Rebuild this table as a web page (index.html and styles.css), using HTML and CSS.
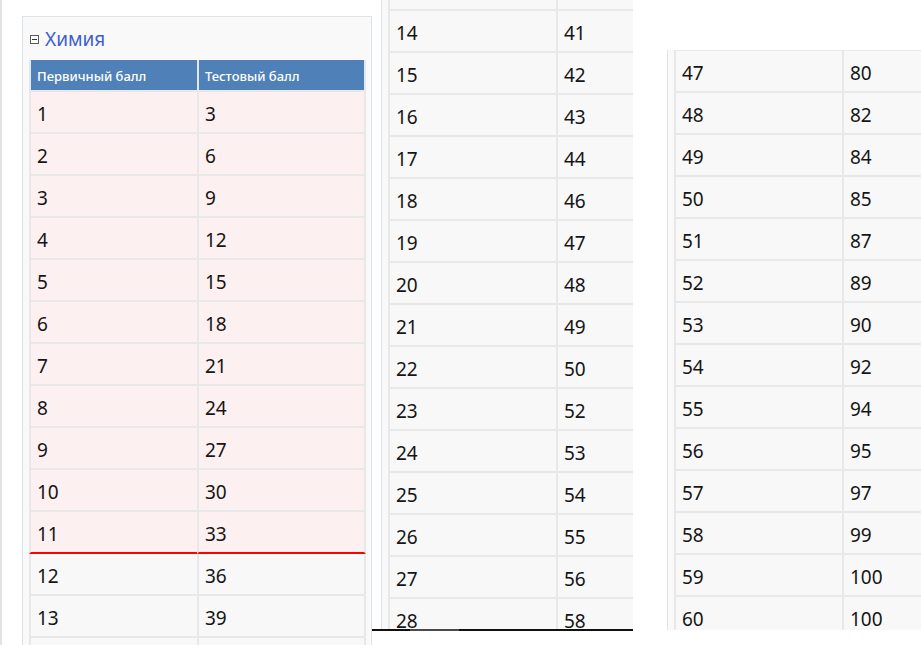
FILE: index.html
```html
<!DOCTYPE html>
<html lang="ru">
<head>
<meta charset="utf-8">
<title>Химия — перевод баллов</title>
<link rel="stylesheet" href="styles.css">
</head>
<body>
  <section class="win win-a">
    <div class="card">
      <h2 class="card-title"><span class="toggle"></span>Химия</h2>
      <div class="grid">
        <div class="cell head">Первичный балл</div><div class="cell head c2">Тестовый балл</div>
        <div class="cell pink">1</div><div class="cell pink c2">3</div>
        <div class="cell pink">2</div><div class="cell pink c2">6</div>
        <div class="cell pink">3</div><div class="cell pink c2">9</div>
        <div class="cell pink">4</div><div class="cell pink c2">12</div>
        <div class="cell pink">5</div><div class="cell pink c2">15</div>
        <div class="cell pink">6</div><div class="cell pink c2">18</div>
        <div class="cell pink">7</div><div class="cell pink c2">21</div>
        <div class="cell pink">8</div><div class="cell pink c2">24</div>
        <div class="cell pink">9</div><div class="cell pink c2">27</div>
        <div class="cell pink">10</div><div class="cell pink c2">30</div>
        <div class="cell pink edge">11</div><div class="cell pink edge c2">33</div>
        <div class="cell">12</div><div class="cell c2">36</div>
        <div class="cell">13</div><div class="cell c2">39</div>
        <div class="cell"></div><div class="cell c2"></div>
      </div>
    </div>
  </section>

  <section class="win win-b">
    <div class="view-b">
      <div class="card cont">
        <div class="grid shift-b">
          <div class="cell"></div><div class="cell c2"></div>
          <div class="cell">14</div><div class="cell c2">41</div>
          <div class="cell">15</div><div class="cell c2">42</div>
          <div class="cell">16</div><div class="cell c2">43</div>
          <div class="cell">17</div><div class="cell c2">44</div>
          <div class="cell">18</div><div class="cell c2">46</div>
          <div class="cell">19</div><div class="cell c2">47</div>
          <div class="cell">20</div><div class="cell c2">48</div>
          <div class="cell">21</div><div class="cell c2">49</div>
          <div class="cell">22</div><div class="cell c2">50</div>
          <div class="cell">23</div><div class="cell c2">52</div>
          <div class="cell">24</div><div class="cell c2">53</div>
          <div class="cell">25</div><div class="cell c2">54</div>
          <div class="cell">26</div><div class="cell c2">55</div>
          <div class="cell">27</div><div class="cell c2">56</div>
          <div class="cell">28</div><div class="cell c2">58</div>
        </div>
      </div>
    </div>
    <div class="bar"><span class="bar-a"></span><span class="bar-thumb"></span><span class="bar-b"></span></div>
  </section>

  <section class="win win-c">
    <div class="card cont">
      <div class="grid top-line">
        <div class="cell">47</div><div class="cell c2">80</div>
        <div class="cell">48</div><div class="cell c2">82</div>
        <div class="cell">49</div><div class="cell c2">84</div>
        <div class="cell">50</div><div class="cell c2">85</div>
        <div class="cell">51</div><div class="cell c2">87</div>
        <div class="cell">52</div><div class="cell c2">89</div>
        <div class="cell">53</div><div class="cell c2">90</div>
        <div class="cell">54</div><div class="cell c2">92</div>
        <div class="cell">55</div><div class="cell c2">94</div>
        <div class="cell">56</div><div class="cell c2">95</div>
        <div class="cell">57</div><div class="cell c2">97</div>
        <div class="cell">58</div><div class="cell c2">99</div>
        <div class="cell">59</div><div class="cell c2">100</div>
        <div class="cell">60</div><div class="cell c2">100</div>
      </div>
    </div>
  </section>
</body>
</html>
```
FILE: styles.css
```css
* { box-sizing: border-box; }

html, body {
  margin: 0;
  padding: 0;
  background: #fff;
}

body {
  width: 921px;
  height: 645px;
  overflow: hidden;
  display: flex;
  align-items: flex-start;
  font-family: "Noto Sans", "Open Sans", sans-serif;
  color: #151515;
}

.win {
  flex: none;
  overflow: hidden;
}

/* first crop */
.win-a {
  width: 372px;
  height: 645px;
  padding: 16px 0 0 22px;
  background: linear-gradient(to right, #e2e2e2 0 2px, #fff 2px);
}

.card {
  width: 350px;
  height: 1000px;
  background: #f9f9f9;
  border: 1px solid #dce4ea;
  border-bottom: none;
  padding: 0 6px;
}

.card.cont {
  width: 400px;
  border-top: none;
  border-right: none;
}

.card-title {
  display: flex;
  align-items: center;
  gap: 6px;
  height: 24px;
  margin: 10px 0 9px 1px;
  font-size: 19px;
  font-weight: 400;
  color: #3e5fcf;
  line-height: 24px;
}

.toggle {
  position: relative;
  width: 9px;
  height: 9px;
  border: 1px solid #5a5a5a;
  background: #fff;
  margin-top: 1px;
}

.toggle::after {
  content: "";
  position: absolute;
  left: 1px;
  right: 1px;
  top: 3px;
  height: 1px;
  background: #333;
}

.grid {
  display: grid;
  grid-template-columns: 168px 169px;
}

.cell {
  height: 42px;
  display: flex;
  align-items: center;
  padding: 4px 6px 0;
  border-left: 2px solid #e8e8e8;
  border-bottom: 2px solid #e8e8e8;
  background: #f8f8f8;
  font-size: 19px;
  line-height: 1;
}

.cell.c2 {
  border-right: 2px solid #e8e8e8;
}

.cell.pink {
  background: #fdf0f0;
}

.cell.edge {
  border-bottom-color: #f00;
}

.cell.head {
  height: 32px;
  padding: 2px 6px 0;
  background: #5080b8;
  color: #fff;
  font-size: 13px;
  font-weight: 500;
  border-left-color: #e3e8ee;
  border-right-color: #e3e8ee;
}

/* second crop */
.win-b {
  width: 261px;
  height: 631px;
  display: flex;
  flex-direction: column;
}

.view-b {
  height: 629px;
  overflow: hidden;
  padding-left: 9px;
  background: #fff;
}

.shift-b {
  margin-top: -31px;
}

.bar {
  display: flex;
  height: 2px;
}

.bar-a { width: 38px; background: #111; }
.bar-thumb { width: 49px; background: #4a4a4a; }
.bar-b { flex: 1; background: #111; }

/* third crop */
.win-c {
  width: 255px;
  height: 580px;
  margin: 50px 0 0 33px;
  padding-left: 1px;
  background: #fff;
}

.top-line {
  border-top: 1px solid #e8e8e8;
}
```
